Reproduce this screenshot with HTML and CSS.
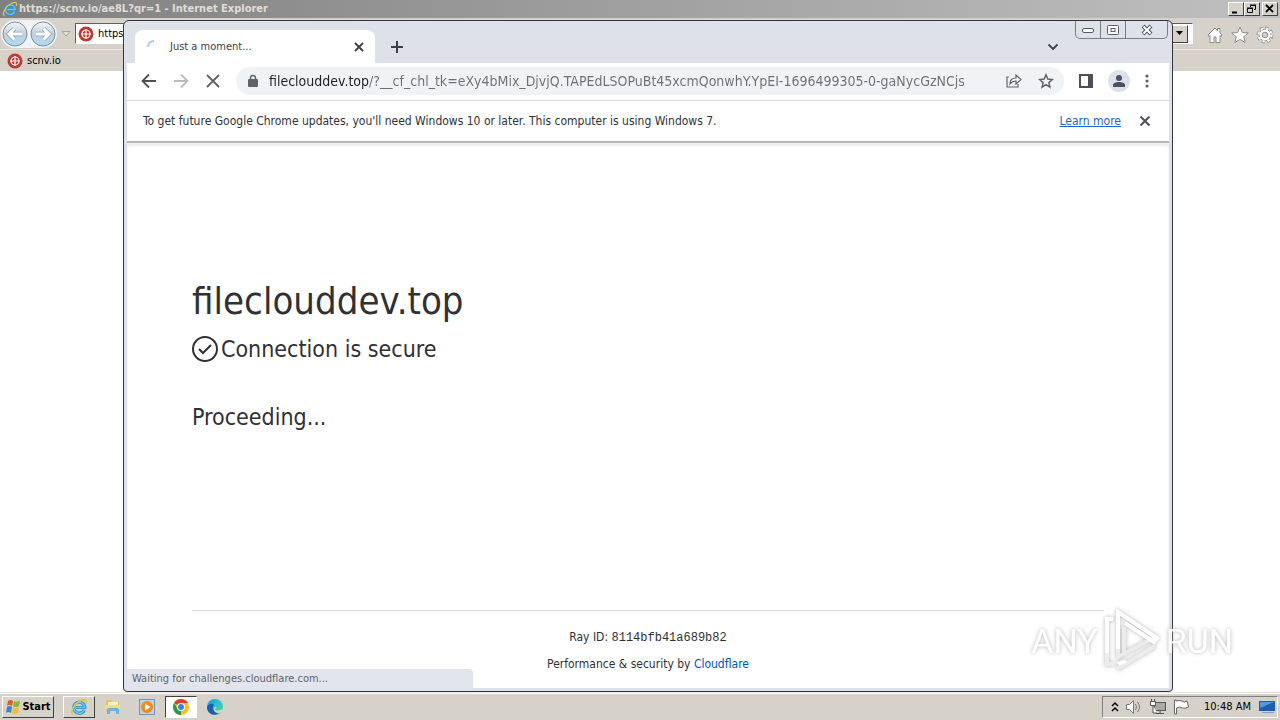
FILE: index.html
```html
<!DOCTYPE html>
<html lang="en">
<head>
<meta charset="utf-8">
<title>Just a moment...</title>
<link rel="stylesheet" href="styles.css">
</head>
<body>
<svg class="defs" width="0" height="0" aria-hidden="true">
  <defs>
    <linearGradient id="ball" x1="0" y1="0" x2="0" y2="1"><stop offset="0" stop-color="#f4f7f9"/><stop offset=".5" stop-color="#c3d0dd"/><stop offset="1" stop-color="#a9dcf4"/></linearGradient>
    <linearGradient id="edge" x1="0" y1="0" x2="1" y2="1"><stop offset="0" stop-color="#1593d8"/><stop offset=".5" stop-color="#2bc3d2"/><stop offset="1" stop-color="#5bd86c"/></linearGradient>
    <symbol id="target" viewBox="0 0 16 16"><circle cx="8" cy="8" r="7.500" fill="#c8352c"/><circle cx="8" cy="8" r="4" fill="none" stroke="#fff" stroke-width="1.200"/><path d="M8 3v10M3 8h10" stroke="#fff" stroke-width="1.200"/></symbol>
    <symbol id="ie" viewBox="0 0 18 18"><path d="M14.300 12A5.500 5.500 0 1 1 14.800 9.500H6" fill="none" stroke="#2b8fd0" stroke-width="3.200"/><path d="M14.300 12A5.500 5.500 0 1 1 14.800 9.500H6" fill="none" stroke="#6cc4f2" stroke-width="1.600"/><path d="M3 16.500C-1 15 4 6 11 2.500c5-2.500 6 0 5 3" fill="none" stroke="#e9c437" stroke-width="1.500"/></symbol>
  </defs>
</svg>
<div class="desktop">
  <main class="ie">
    <header class="ie-title"><svg width="16" height="16"><use href="#ie"/></svg><span>https://scnv.io/ae8L?qr=1 - Internet Explorer</span>
      <div class="classic-buttons">
        <button aria-label="Minimize"><svg width="10" height="10"><path d="M1 8.500h5" stroke="#000" stroke-width="2"/></svg></button><button aria-label="Restore"><svg width="10" height="10" fill="none" stroke="#000"><path d="M3.500 3V1.500h5v4H7M3 1h6M.5 4.500h5v4h-5zM0 4h6"/></svg></button><button class="close" aria-label="Close"><svg width="10" height="10"><path d="M1 1l7 7M8 1l-7 7" stroke="#000" stroke-width="1.800"/></svg></button>
      </div>
    </header>
    <div class="ie-nav">
      <div class="ie-arrows">
        <button aria-label="Back"><svg width="26" height="26"><circle cx="13" cy="13" r="12" fill="url(#ball)" stroke="#7f8c9b"/><path d="M20 13H7M12.500 7.500L7 13l5.500 5.500" fill="none" stroke="#8ba2b8" stroke-width="4.500"/><path d="M20 13H7M12.500 7.500L7 13l5.500 5.500" fill="none" stroke="#fff" stroke-width="3"/></svg></button>
        <button aria-label="Forward"><svg width="26" height="26"><circle cx="13" cy="13" r="12" fill="url(#ball)" stroke="#7f8c9b"/><path d="M6 13h13M13.500 7.500L19 13l-5.500 5.500" fill="none" stroke="#8ba2b8" stroke-width="4.500"/><path d="M6 13h13M13.500 7.500L19 13l-5.500 5.500" fill="none" stroke="#fff" stroke-width="3"/></svg></button>
      </div>
      <svg width="10" height="8"><path d="M1 1.500h8L5 6z" fill="#e4e0d8" stroke="#aaa69e"/></svg>
      <div class="ie-address"><svg width="16" height="16"><use href="#target"/></svg><input aria-label="Address" value="https://scnv.io/ae8L?qr=1"><button aria-label="Show addresses"><svg width="9" height="6"><path d="M1 0h7L4.500 4z"/></svg></button></div>
      <div class="ie-tools">
        <button aria-label="Home"><svg width="18" height="18"><path d="M2 9L9 2l2.500 2.500V2.500h2.500V7l2 2-1 1.500-1-1V16.500h-4V11H8v5.500H4V9.500l-1 1z" fill="#fff" stroke="#8c8c8c"/></svg></button>
        <button aria-label="Favorites"><svg width="18" height="18"><path d="M9 1l2.300 5.500 6 .4-4.600 3.900 1.500 5.800L9 13.400l-5.200 3.200 1.500-5.800L.7 6.900l6-.4z" fill="#fff" stroke="#8c8c8c"/></svg></button>
        <button aria-label="Tools"><svg width="18" height="18"><circle cx="9" cy="9" r="6.700" fill="none" stroke="#888" stroke-width="3.400" stroke-dasharray="3 2.260"/><circle cx="9" cy="9" r="5.800" fill="#fff" stroke="#999"/><circle cx="9" cy="9" r="6.500" fill="none" stroke="#fff" stroke-width="2.200" stroke-dasharray="2.300 2.800"/><circle cx="9" cy="9" r="2.800" fill="#d6d1c9" stroke="#888"/></svg></button>
      </div>
    </div>
    <div class="ie-favorites"><svg width="16" height="16"><use href="#target"/></svg><span>scnv.io</span></div>
  </main>

  <section class="chrome" aria-label="Google Chrome">
    <div class="window-buttons">
      <button aria-label="Minimize"><svg width="14" height="8"><rect x="1.500" y="2.500" width="11" height="4" rx="1.500" fill="#fff" stroke="#555b68"/></svg></button><button aria-label="Maximize"><svg width="14" height="12"><rect x="1.500" y="1.500" width="11" height="9" rx="1" fill="#fff" stroke="#555b68"/><rect x="5" y="4.500" width="4" height="3" fill="none" stroke="#555b68"/></svg></button><button class="wide" aria-label="Close"><svg width="14" height="12"><path d="M3 2l8 8M11 2l-8 8" stroke="#555b68" stroke-width="4"/><path d="M3.500 2.500l7 7M10.500 2.500l-7 7" stroke="#fff" stroke-width="2"/></svg></button>
    </div>
    <div class="tabs">
      <div class="tab"><svg width="14" height="14"><path d="M1 7a6 6 0 0 1 6-6" fill="none" stroke="#a9c8f5" stroke-width="2"/></svg><span>Just a moment...</span><button aria-label="Close tab"><svg width="10" height="10"><path d="M1 1l8 8M9 1L1 9" stroke="#3c4043" stroke-width="1.800"/></svg></button></div>
      <button class="new-tab" aria-label="New tab"><svg width="12" height="12"><path d="M6 0v12M0 6h12" stroke="#3c4043" stroke-width="2"/></svg></button>
      <button class="tab-search" aria-label="Search tabs"><svg width="12" height="8"><path d="M1.500 1.500L6 6l4.500-4.500" fill="none" stroke="#3c4043" stroke-width="1.800"/></svg></button>
    </div>
    <div class="toolbar">
      <button aria-label="Back"><svg width="16" height="16" fill="none" stroke="#4d5156" stroke-width="1.800"><path d="M15 8H2M8 1.500L1.500 8 8 14.500"/></svg></button>
      <button aria-label="Forward"><svg width="16" height="16" fill="none" stroke="#b9bbbe" stroke-width="1.800"><path d="M1 8h13M8 1.500L14.500 8 8 14.500"/></svg></button>
      <button aria-label="Stop"><svg width="16" height="16"><path d="M2 2l12 12M14 2L2 14" stroke="#5f6368" stroke-width="1.800"/></svg></button>
      <div class="omnibox">
        <svg width="10" height="14"><path d="M2.500 6V4a2.500 2.500 0 0 1 5 0v2" fill="none" stroke="#5f6368" stroke-width="1.500"/><rect y="5" width="10" height="8" rx="1" fill="#5f6368"/></svg>
        <input aria-label="Address and search" value="fileclouddev.top/?__cf_chl_tk=eXy4bMix_DjvjQ.TAPEdLSOPuBt45xcmQonwhY.YpEI-1696499305-0-gaNycGzNCjs">
        <button aria-label="Share"><svg width="18" height="16" fill="none" stroke="#5f6368" stroke-width="1.200"><path d="M4 4H2v10h11v-3M5 11c0-4 2-6 6-6V2l5 4.500-5 4.500V8c-3 0-4.500 1-6 3z"/></svg></button>
        <button aria-label="Bookmark"><svg width="16" height="16"><path d="M8 1.800l1.800 4.300 4.600.4-3.500 3.100 1 4.500L8 11.700l-3.900 2.400 1-4.500L1.600 6.500l4.600-.4z" fill="none" stroke="#5f6368" stroke-width="1.500"/></svg></button>
      </div>
      <button aria-label="Side panel"><svg width="14" height="14"><rect x="1" y="1" width="12" height="12" fill="#fff" stroke="#4d5156" stroke-width="2"/><path d="M9 0h5v14H9z" fill="#4d5156"/></svg></button>
      <button class="profile" aria-label="Profile"><svg width="14" height="14" fill="#4a5160"><circle cx="7" cy="4" r="3"/><path d="M1 13v-2c0-2 3-3 6-3s6 1 6 3v2z"/></svg></button>
      <button aria-label="Menu"><svg width="4" height="14" fill="#5f6368"><circle cx="2" cy="2" r="1.600"/><circle cx="2" cy="7" r="1.600"/><circle cx="2" cy="12" r="1.600"/></svg></button>
    </div>
    <div class="infobar"><span>To get future Google Chrome updates, you'll need Windows 10 or later. This computer is using Windows 7.</span><a href="#">Learn more</a><button aria-label="Dismiss"><svg width="12" height="12"><path d="M1.500 1.500l9 9M10.500 1.500l-9 9" stroke="#4d5156" stroke-width="2"/></svg></button></div>
    <article class="page">
      <div class="challenge">
        <h1>fileclouddev.top</h1>
        <h2><svg width="26" height="26" fill="none" stroke="#313131" stroke-width="2"><circle cx="13" cy="13" r="12"/><path d="M7 13l4 4 8-8"/></svg><span>Connection is secure</span></h2>
        <p>Proceeding...</p>
      </div>
      <footer><p>Ray ID: <code>8114bfb41a689b82</code></p><p>Performance &amp; security by <a href="#">Cloudflare</a></p></footer>
    </article>
    <div class="status">Waiting for challenges.cloudflare.com...</div>
  </section>

  <nav class="taskbar">
    <button class="start"><svg width="16" height="18"><path d="M3 3q3-2 5 0L7 8q-3-2-5 0z" fill="#e8562d"/><path d="M9 3q3 1.500 6-.5L14 8q-3 2-6 0z" fill="#86b83c"/><path d="M2 9q3-2 5 0l-1 6q-3-2-5 0z" fill="#3f83c9"/><path d="M8 9q3 2 6 0l-1 6q-3 2-6 0z" fill="#f4bf2f"/></svg>Start</button>
    <button class="task raised" aria-label="Internet Explorer"><svg width="18" height="18"><use href="#ie"/></svg></button>
    <button class="task" aria-label="File Explorer"><svg width="18" height="18"><path d="M2 2h5l1 2h7v9H2z" fill="#e9c657"/><path d="M4 4h10v4H4z" fill="#f8f0c8"/><path d="M1 7h15v4H1z" fill="#f5dc82"/><path d="M3 16v-4q0-2 2-2h8q2 0 2 2v4h-3v-3H6v3z" fill="#6fb3dc"/></svg></button>
    <button class="task" aria-label="Media Player"><svg width="18" height="18"><rect x="1.500" y="1.500" width="15" height="15" fill="#b9d4e9" stroke="#6c96bb"/><circle cx="9" cy="9" r="6" fill="#f18a1c"/><path d="M7 5.500L12.500 9 7 12.500z" fill="#fff"/></svg></button>
    <button class="task pressed" aria-label="Google Chrome"><svg width="18" height="18"><circle cx="9" cy="9" r="8" fill="#fbc116"/><path d="M9 9L2.100 5A8 8 0 0 1 15.900 5H9z" fill="#e33b2e"/><path d="M2.100 5L5.600 11 9 13 9 17A8 8 0 0 1 2.100 5z" fill="#229a4f"/><circle cx="9" cy="9" r="4" fill="#fff"/><circle cx="9" cy="9" r="3" fill="#3a7de8"/></svg></button>
    <button class="task" aria-label="Microsoft Edge"><svg width="18" height="18"><circle cx="9" cy="9" r="8" fill="url(#edge)"/><path d="M1 9c2-4 6-4 7-2-3 3-1 8 6 7-4 5-13 3-13-5z" fill="#1260b8"/><path d="M9 9c2-1 2 2 0 2 1 2 4 2 7 0l1 2-3 2c-5 1-8-3-5-6z" fill="#d6d1c9"/></svg></button>
    <div class="tray">
      <svg width="8" height="12" fill="none" stroke="#000" stroke-width="1.500"><path d="M1 5l3-3 3 3M1 10l3-3 3 3"/></svg>
      <svg width="18" height="16" fill="none" stroke="#777"><path d="M1.500 5.500h3l4-4v13l-4-4h-3z" fill="#fff"/><path d="M10.500 5q2 3 0 6M12.500 3q4 5 0 10"/></svg>
      <svg width="18" height="16" fill="none" stroke="#555"><rect x="5.500" y="3.500" width="11" height="8" fill="#aaa"/><path d="M11 12v2M7 14.500h8"/><path d="M1.500 2.500h5v4h-5zM2.500 0v3M5.500 0v3M4 6v8h4" fill="#fff"/></svg>
      <svg width="18" height="16" fill="#fff" stroke="#666"><path d="M1.500 1v14h2V9q3-2 6 0 2 1 6-1L14 2q-3 2-5 0-3-1-6 0V1z"/></svg>
      <time>10:48 AM</time>
      <svg width="16" height="14"><path d="M0 1h16v10H0z" fill="#235cae"/><path d="M1 2h14L1 8z" fill="#5598df"/><path d="M3 12h12v1H3z" fill="#7aa2cc"/></svg>
    </div>
  </nav>
  <div class="watermark"><span>ANY</span><svg width="58" height="64" viewBox="0 0 58 64" fill="none" stroke-width="4"><g stroke="#e9e9e9"><path d="M15 40v8l37-20M21 18v26M4 42v13h7M14 60l38-23"/></g><path d="M15 40V3l39 26-3 4-29-19M10 10H4v34M15 55l8-3" stroke="#fff"/></svg><span>RUN</span></div>
</div>
</body>
</html>
```
FILE: styles.css
```css
* { box-sizing: border-box; }
body { margin: 0; font: 11px/16px "DejaVu Sans Condensed", "DejaVu Sans", sans-serif; color: #000; }
button { display: flex; align-items: center; justify-content: center; flex: none; margin: 0; padding: 0; border: 0; background: none; font: inherit; color: inherit; }
input { min-width: 0; padding: 0; border: 0; outline: 0; background: none; font: inherit; color: inherit; }
svg { flex: none; display: block; }
.defs { position: absolute; }
.desktop { position: relative; display: flex; flex-direction: column; height: 100vh; overflow: hidden; background: #fff; }
.ie { flex: 1; min-height: 0; }
.ie-title { display: flex; align-items: center; gap: 1px; height: 18px; padding: 0 2px; background: linear-gradient(90deg, #808080, #c0c0c0); color: #e0dcd6; font-weight: bold; }
.classic-buttons { display: flex; margin-left: auto; }
.classic-buttons button { width: 16px; height: 14px; background: #d6d1c9; border: 1px solid; border-color: #fff #404040 #404040 #fff; }
.classic-buttons .close { margin-left: 2px; }
.ie-nav { display: flex; align-items: center; gap: 4px; height: 31px; padding: 0 6px 0 1px; background: #d6d1c9; }
.ie-arrows { display: flex; gap: 2px; padding: 1px; border-radius: 14px; background: #f0f2f4; }
.ie-address { flex: 1; display: flex; align-items: center; gap: 4px; height: 21px; padding-left: 2px; background: #fff; border: 1px solid; border-color: #606060 #fff #fff #606060; }
.ie-address input { flex: 1; }
.ie-address button { width: 17px; height: 18px; margin-right: 4px; background: #d6d1c9; border: 1px solid; border-color: #fff #404040 #404040 #fff; }
.ie-tools { display: flex; gap: 7px; padding: 2px 0 0 9px; }
.ie-favorites { display: flex; align-items: center; gap: 4px; height: 22px; padding-left: 7px; background: #d6d1c9; border-top: 1px solid #eae6e0; }
.chrome { position: absolute; inset: 20px 107px 28px 123px; display: flex; flex-direction: column; border: 1px solid #34383e; border-radius: 6px 6px 4px 4px; padding: 1px 3px 3px; background: #dee1e9; overflow: hidden; }
.window-buttons { position: absolute; top: 0; right: 4px; display: flex; border: 1px solid #777d89; border-top: 0; border-radius: 0 0 5px 5px; }
.window-buttons button { width: 25px; height: 17px; border-right: 1px solid #777d89; }
.window-buttons .wide { width: 41px; border: 0; }
.tabs { display: flex; align-items: center; height: 41px; padding: 8px 110px 0 8px; }
.tab { display: flex; align-items: center; gap: 9px; width: 240px; height: 33px; padding: 0 11px 0 12px; background: #fff; border-radius: 8px 8px 0 0; color: #3c4043; }
.tab span { flex: 1; }
.new-tab { margin-left: 16px; }
.tab-search { margin-left: auto; }
.toolbar { display: flex; align-items: center; gap: 16px; height: 38px; padding: 0 20px 2px 14px; background: #fff; border-bottom: 1px solid #d8dade; }
.omnibox { flex: 1; display: flex; align-items: center; gap: 15px; height: 28px; padding: 0 10px 0 12px; margin: 0 -1px; border-radius: 14px; background: #f0f3f6; }
.omnibox input { flex: 1; height: 24px; margin-left: -4px; font-size: 14px; color: transparent; background: linear-gradient(90deg, #202124 0 100px, #6c7075 100px); background-clip: text; -webkit-background-clip: text; }
.profile { width: 22px; height: 22px; margin: 0 -1px; border-radius: 50%; background: #dee1e6; }
.infobar { display: flex; align-items: center; gap: 18px; height: 42px; padding: 0 18px 0 16px; background: #fff; border-bottom: 2px solid #b4b5b7; font-size: 12px; color: #303236; }
.infobar span { flex: 1; }
.infobar a { color: #1967d2; }
.page { flex: 1; display: flex; flex-direction: column; justify-content: space-between; padding: 128px 65px 14px; background: #fff; box-shadow: inset 0 3px 3px #eee; color: #313131; }
.page h1 { margin: 0; font-size: 38px; line-height: 60px; font-weight: normal; }
.page h2 { display: flex; align-items: center; gap: 3px; margin: 0; font-size: 23px; line-height: 36px; font-weight: normal; }
.challenge p { margin: 32px 0 0; font-size: 23px; line-height: 36px; }
.page footer { padding-top: 16px; border-top: 1px solid #d9d9d9; text-align: center; font-size: 12px; }
.page footer p { margin: 0; line-height: 20px; }
.page footer p + p { margin-top: 7px; }
.page footer a { color: #0051c3; text-decoration: none; }
.page code { font: 12px "Liberation Mono", monospace; }
.status { position: absolute; left: 3px; bottom: 2px; width: 346px; height: 20px; padding: 0 5px; line-height: 20px; color: #5f6368; background: #e2e6ec; border-radius: 0 4px 0 0; }
.taskbar { display: flex; align-items: center; gap: 2px; height: 28px; padding: 2px; background: #d6d1c9; border-top: 1px solid #e8e4dc; box-shadow: inset 0 1px #fff; }
.start { width: 52px; height: 22px; gap: 1px; margin-right: 7px; border: 1px solid; border-color: #fff #404040 #404040 #fff; font-weight: bold; }
.task { width: 32px; height: 22px; border: 1px solid transparent; }
.raised { border-color: #fff #404040 #404040 #fff; }
.pressed { background: #fff; border-color: #404040 #fff #fff #404040; }
.tray { display: flex; align-items: center; gap: 6px; height: 22px; margin-left: auto; padding: 0 2px 0 8px; border: 1px solid; border-color: #808080 #fff #fff #808080; }
.tray time { margin: 0 2px 0 7px; }
.watermark { position: absolute; right: 47px; bottom: 47px; display: flex; align-items: center; gap: 5px; color: #fff; font: 34px/40px Roboto, "Liberation Sans", sans-serif; opacity: .85; filter: drop-shadow(0 0 2px #aaa); pointer-events: none; }
```
